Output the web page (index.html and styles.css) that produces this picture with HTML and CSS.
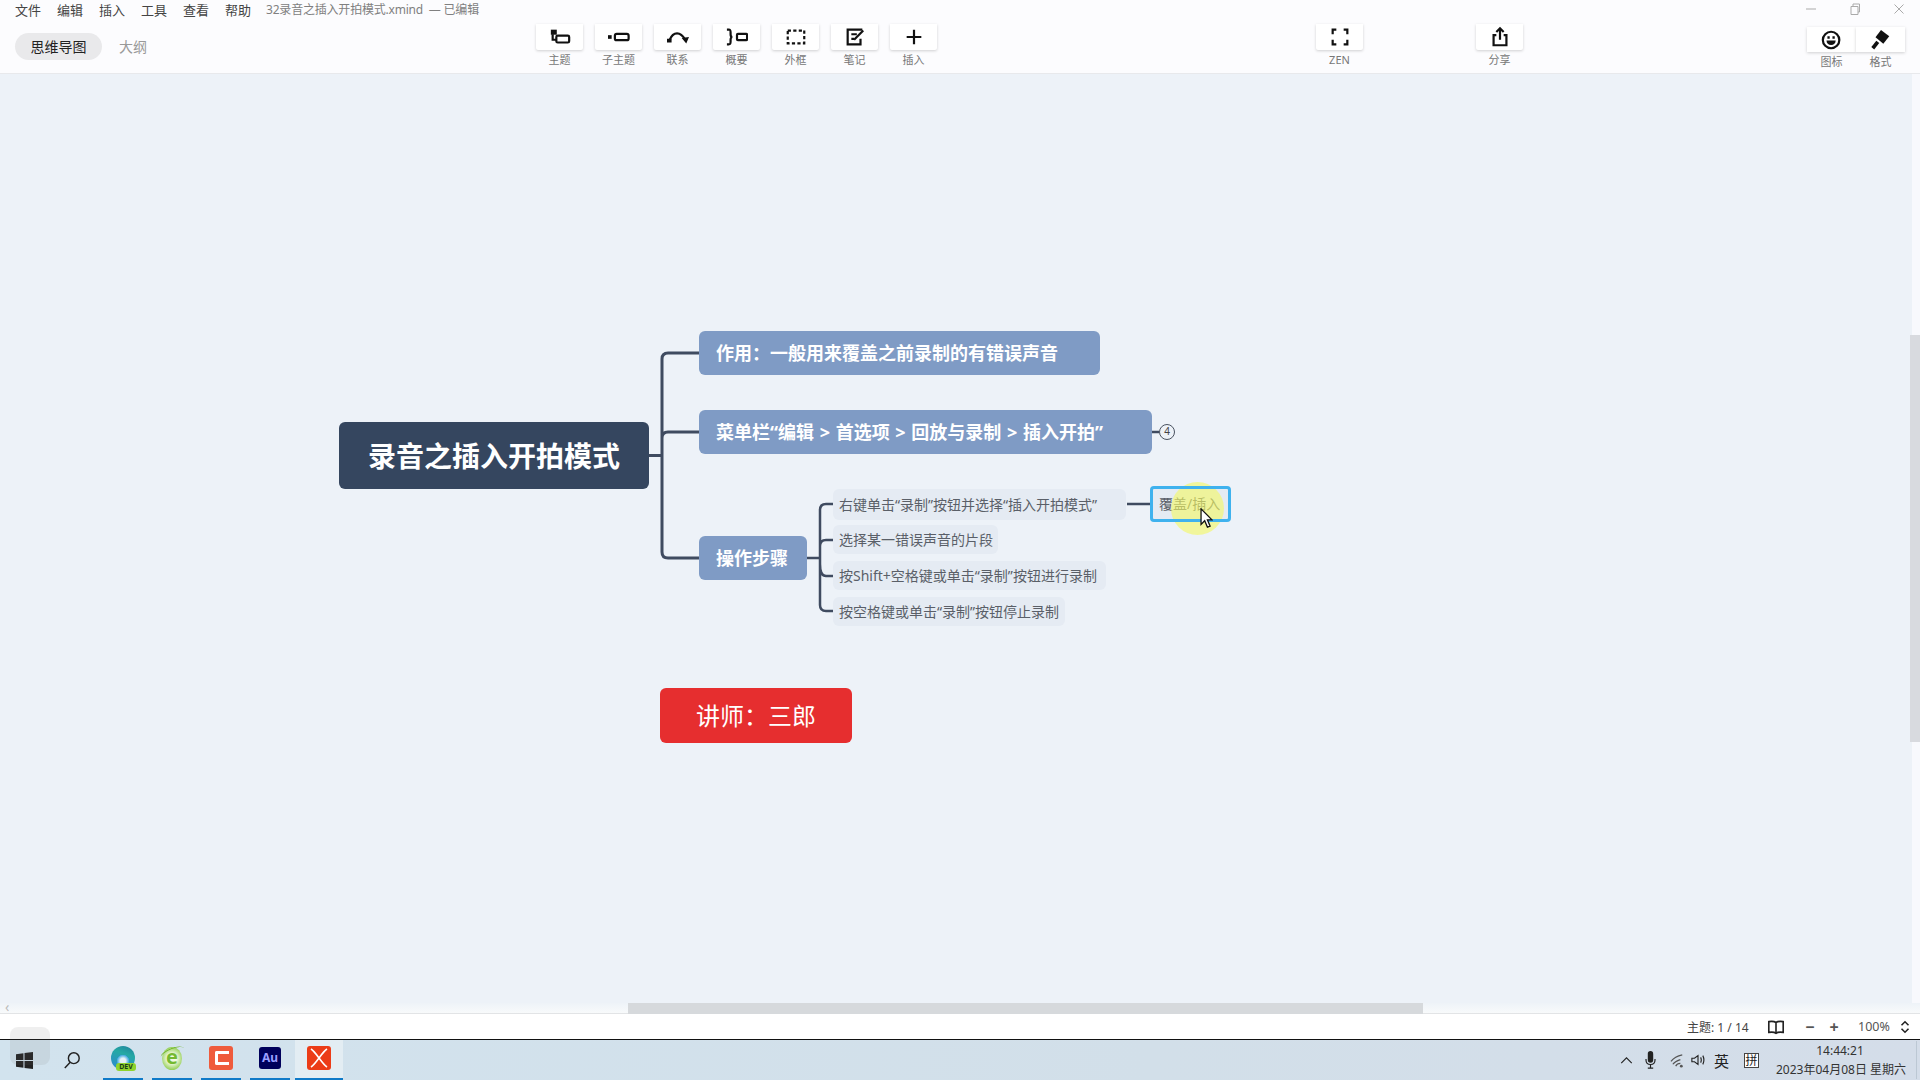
FILE: index.html
```html
<!DOCTYPE html>
<html>

<head>
    <title>32录音之插入开拍模式.xmind</title>
    <meta name="viewport" content="width=device-width, initial-scale=1.0">
    <link rel="stylesheet" href="styles.css">
</head>

<body>
    <div class="titlebar">
        <div class="menu">
            <span>文件</span><span>编辑</span><span>插入</span><span>工具</span><span>查看</span><span>帮助</span>
        </div>
        <div class="doc-title">32录音之插入开拍模式.xmind&nbsp; — 已编辑</div>
        <div class="win-controls">
            <svg viewBox="0 0 12 12"><path d="M1 6h10" /></svg>
            <svg viewBox="0 0 12 12"><path d="M2 3.500h7v8H2zM4 3.500V1h6.500v8H9" /></svg>
            <svg viewBox="0 0 12 12"><path d="M1.500 1.500l9 9M10.500 1.500l-9 9" /></svg>
        </div>
    </div>

    <div class="toolbar">
        <div class="view-tabs">
            <div class="view-tab active">思维导图</div>
            <div class="view-tab">大纲</div>
        </div>

        <div class="tool-group main-tools">
            <div class="tool">
                <div class="tool-box">
                    <svg viewBox="0 0 24 24">
                        <path class="solid" d="M2 4h6.500v5.500H2z" />
                        <path d="M4 9v6h4" />
                        <rect x="8" y="10.500" width="14" height="7.500" rx="1.500" />
                    </svg>
                </div>
                <div class="tool-label">主题</div>
            </div>
            <div class="tool">
                <div class="tool-box">
                    <svg viewBox="0 0 24 24">
                        <path class="solid" d="M0 10h4v4H0z" />
                        <rect x="7.500" y="8.500" width="15" height="7" rx="2" />
                    </svg>
                </div>
                <div class="tool-label">子主题</div>
            </div>
            <div class="tool">
                <div class="tool-box">
                    <svg viewBox="0 0 24 24">
                        <path class="solid" d="M0 14h5v4H0zM16 13l8-1-3 7z" />
                        <path d="M3 15c2-5 5-7 8-7s6 2 9 7" />
                    </svg>
                </div>
                <div class="tool-label">联系</div>
            </div>
            <div class="tool">
                <div class="tool-box">
                    <svg viewBox="0 0 24 24">
                        <path d="M1 4h2c2 0 2 1 2 3v2c0 2 1 3 2 3-1 0-2 1-2 3v2c0 2 0 3-2 3H1" />
                        <rect x="12" y="8.500" width="11" height="7" rx="1" />
                    </svg>
                </div>
                <div class="tool-label">概要</div>
            </div>
            <div class="tool">
                <div class="tool-box">
                    <svg viewBox="0 0 24 24">
                        <rect x="3" y="5" width="18" height="14" stroke-dasharray="3.500 2.500" />
                    </svg>
                </div>
                <div class="tool-label">外框</div>
            </div>
            <div class="tool">
                <div class="tool-box">
                    <svg viewBox="0 0 24 24">
                        <path d="M20 4H4v16h14v-6M8 9h6M8 14h3" />
                        <path d="M11 15l10-10" />
                    </svg>
                </div>
                <div class="tool-label">笔记</div>
            </div>
            <div class="tool">
                <div class="tool-box">
                    <svg viewBox="0 0 24 24"><path d="M12 4v16M4 12h16" /></svg>
                </div>
                <div class="tool-label">插入</div>
            </div>
        </div>

        <div class="tool zen-tool">
            <div class="tool-box">
                <svg viewBox="0 0 24 24">
                    <path d="M8 4H4v5M16 4h4v5M8 20H4v-5M16 20h4v-5" />
                </svg>
            </div>
            <div class="tool-label">ZEN</div>
        </div>

        <div class="tool share-tool">
            <div class="tool-box">
                <svg viewBox="0 0 24 24">
                    <path d="M8 10H5v11h14V10h-3M12 15V3M8 6.500L12 2.500l4 4" />
                </svg>
            </div>
            <div class="tool-label">分享</div>
        </div>

        <div class="side-tools">
            <div class="side-tool">
                <div class="side-box">
                    <svg viewBox="0 0 24 24">
                        <circle cx="11" cy="12" r="9" />
                        <path class="solid" d="M6 12.500h10c0 3-2 5-5 5s-5-2-5-5zM7 8h2.500v2.500H7zM12.500 8H15v2.500h-2.500z" />
                    </svg>
                </div>
                <div class="tool-label">图标</div>
            </div>
            <div class="side-tool">
                <div class="side-box">
                    <svg viewBox="0 0 24 24">
                        <path class="solid" d="M12 1l9 7-6.500 8L6 9z" />
                        <path class="brush-handle" d="M8.500 14L3 21" />
                    </svg>
                </div>
                <div class="tool-label">格式</div>
            </div>
        </div>
    </div>

    <!-- The map is a free canvas, nodes sit at their own coordinates -->
    <div class="canvas">
        <svg class="links" viewBox="0 0 1920 939">
            <path d="M649 381.500h13M699 279h-31q-6 0-6 6v193q0 6 6 6h31M662 364q0-6 6-6h31" />
            <path class="thin" d="M807 484h13M833 430h-7q-6 0-6 6v95q0 6 6 6h7M820 472q0-6 6-6h7M820 490q0 12 6 12h7" />
            <path class="thin" d="M1127 430h23M1152 358h7" />
        </svg>

        <div class="node root">录音之插入开拍模式</div>
        <div class="node topic topic-1">作用：一般用来覆盖之前录制的有错误声音</div>
        <div class="node topic topic-2">菜单栏“编辑 &gt; 首选项 &gt; 回放与录制 &gt; 插入开拍”</div>
        <div class="node topic topic-3">操作步骤</div>
        <div class="collapse">4</div>

        <div class="node sub sub-1">右键单击“录制”按钮并选择“插入开拍模式”</div>
        <div class="node sub sub-2">选择某一错误声音的片段</div>
        <div class="node sub sub-3">按Shift+空格键或单击“录制”按钮进行录制</div>
        <div class="node sub sub-4">按空格键或单击“录制”按钮停止录制</div>
        <div class="node sub picked">覆盖/插入</div>
        <div class="node teacher">讲师：三郎</div>

        <div class="spotlight"></div>
        <div class="picked-frame"></div>
        <svg class="pointer" viewBox="0 0 14 22">
            <path d="M1 1v17l4-4 3 7 3-1-3-7h5z" />
        </svg>

        <div class="v-scroll"><div class="v-thumb"></div></div>
        <div class="h-scroll">
            <span class="h-arrow">‹</span>
            <div class="h-thumb"></div>
        </div>
    </div>

    <div class="statusbar">
        <span class="topic-count">主题: 1 / 14</span>
        <svg class="status-icon book" viewBox="0 0 20 16">
            <path d="M10 3C8 1.500 5 1.500 2 2v12c3-.500 6-.500 8 1 2-1.500 5-1.500 8-1V2c-3-.500-6-.500-8 1zM10 3v12" />
        </svg>
        <span class="zoom-btn">−</span>
        <span class="zoom-btn">+</span>
        <span class="zoom-value">100%</span>
        <svg class="status-icon updown" viewBox="0 0 10 16">
            <path d="M1 6l4-4 4 4M1 10l4 4 4-4" />
        </svg>
    </div>

    <div class="taskbar">
        <div class="watermark"></div>
        <div class="task-start">
            <svg viewBox="0 0 16 16">
                <path d="M0 2.200l7-1v6.300H0zM8 1l8-1v7.500H8zM0 8.500h7v6.300l-7-1zM8 8.500h8V16l-8-1z" />
            </svg>
        </div>
        <div class="task-search">
            <svg viewBox="0 0 20 20">
                <circle cx="12" cy="8" r="6" />
                <path d="M8 12.500L2 19" />
            </svg>
        </div>

        <div class="task-app running">
            <div class="edge"><span class="dev-badge">DEV</span></div>
        </div>
        <div class="task-app running">
            <div class="ie">e</div>
        </div>
        <div class="task-app running">
            <div class="camtasia"><div class="camtasia-c"></div></div>
        </div>
        <div class="task-app running">
            <div class="audition">Au</div>
        </div>
        <div class="task-app running current">
            <div class="xmind">
                <svg viewBox="0 0 24 24"><path d="M4 3c5 3 11 15 16 18M20 3C15 6 9 18 4 21" /></svg>
            </div>
        </div>

        <div class="tray">
            <svg class="tray-icon chevron" viewBox="0 0 14 8"><path d="M1 7l6-6 6 6" /></svg>
            <svg class="tray-icon mic" viewBox="0 0 12 20">
                <rect class="solid" x="3" y="0" width="6" height="13" rx="3" />
                <path d="M1 9v1c0 3 2 5 5 5s5-2 5-5V9M6 15v4M3 19h6" />
            </svg>
            <svg class="tray-icon wifi" viewBox="0 0 18 16">
                <path d="M1 9c3-4 7-6 12-7M3 12c2-3 5-4 8-5M6 14c1-2 3-3 5-3" />
                <circle class="solid" cx="12" cy="14" r="1.500" />
            </svg>
            <svg class="tray-icon speaker" viewBox="0 0 16 16">
                <path d="M1 6v4h3l4 3V3L4 6zM11 5c1 2 1 4 0 6M13.500 3c1.500 3 1.500 7 0 10" />
            </svg>
            <span class="ime-lang">英</span>
            <span class="ime-mode">拼</span>
            <div class="clock">
                <div>14:44:21</div>
                <div>2023年04月08日 星期六</div>
            </div>
        </div>
    </div>
</body>

</html>
```

FILE: styles.css
```css
:root {
    --canvas-bg: #edf2f8;
    --chrome-bg: #fcfcfe;
    --line-color: #3f4b60;
    --topic-color: #7f9bc5;
    --text-grey: #666;
}

* {
    box-sizing: border-box;
}

html,
body {
    height: 100%;
}

body {
    margin: 0;
    display: flex;
    flex-direction: column;
    overflow: hidden;
    background: var(--chrome-bg);
    color: #333;
    font-family: "Noto Sans", "Noto Sans CJK SC", sans-serif;
}

svg {
    display: block;
    fill: none;
    stroke: currentColor;
}

svg .solid {
    fill: currentColor;
    stroke: none;
}

/* -- Title bar -- */
.titlebar {
    height: 20px;
    padding-left: 15px;
    padding-bottom: 2px;
    display: flex;
    align-items: center;
    font-size: 13px;
}

.menu {
    display: flex;
    gap: 16px;
    width: 251px;
    color: #444;
}

.doc-title {
    font-size: 12px;
    letter-spacing: -0.2px;
    color: #808080;
    white-space: nowrap;
}

.win-controls {
    margin-left: auto;
    width: 115px;
    padding-right: 15px;
    display: flex;
    justify-content: space-between;
    color: #aaa;
}

.win-controls svg {
    width: 12px;
    height: 12px;
    stroke-width: 1;
}

/* -- Toolbar -- */
.toolbar {
    height: 54px;
    padding-top: 4px;
    display: flex;
    border-bottom: 1px solid #e8e9ec;
}

.view-tabs {
    width: 536px;
    padding: 9px 0 0 15px;
    display: flex;
    align-items: flex-start;
    gap: 17px;
}

.view-tab {
    height: 27px;
    line-height: 27px;
    font-size: 14px;
    color: #999;
}

.view-tab.active {
    width: 87px;
    text-align: center;
    background: #e9e9eb;
    border-radius: 14px;
    color: #222;
}

.tool-group {
    display: flex;
    gap: 12px;
}

.tool {
    width: 47px;
    display: flex;
    flex-direction: column;
    align-items: center;
}

.tool-box {
    width: 47px;
    height: 26px;
    background: #fff;
    box-shadow: 0 1px 3px rgba(0, 0, 0, 0.18);
    border-radius: 0 0 2px 2px;
    display: flex;
    align-items: center;
    justify-content: center;
    color: #111;
}

.tool-box svg,
.side-box svg {
    width: 22px;
    height: 22px;
    stroke-width: 2.4;
}

.side-box .brush-handle {
    stroke-width: 4;
}

.tool-label {
    margin-top: 3px;
    font-size: 11px;
    line-height: 14px;
    color: #777;
    white-space: nowrap;
}

.zen-tool {
    margin-left: 379px;
}

.share-tool {
    margin-left: 113px;
}

.side-tools {
    margin-left: 284px;
    padding-top: 3px;
    display: flex;
}

.side-tool {
    width: 49px;
    text-align: center;
}

.side-box {
    height: 25px;
    background: #fff;
    box-shadow: 0 1px 3px rgba(0, 0, 0, 0.18);
    display: flex;
    align-items: center;
    justify-content: center;
    color: #111;
}

.side-tool .tool-label {
    margin-top: 3px;
}

/* -- Canvas -- */
.canvas {
    position: relative;
    flex: 1;
    background: var(--canvas-bg);
}

.links {
    position: absolute;
    top: 0;
    left: 0;
    width: 1920px;
    height: 939px;
    color: var(--line-color);
    stroke-width: 3;
}

.links .thin {
    stroke-width: 2.5;
}

.node {
    position: absolute;
    display: flex;
    align-items: center;
    white-space: nowrap;
    padding-bottom: 2px;
}

.root {
    left: 339px;
    top: 348px;
    width: 310px;
    height: 67px;
    justify-content: center;
    background: #35465f;
    border-radius: 6px;
    color: #fff;
    font-size: 28px;
    font-weight: 700;
}

.topic {
    left: 699px;
    height: 44px;
    padding-left: 17px;
    background: var(--topic-color);
    border-radius: 6px;
    color: #fff;
    font-size: 18px;
    font-weight: 700;
}

.topic-1 {
    top: 257px;
    width: 401px;
}

.topic-2 {
    top: 336px;
    width: 453px;
    word-spacing: 1px;
}

.topic-3 {
    top: 462px;
    width: 108px;
}

.collapse {
    position: absolute;
    left: 1159px;
    top: 350px;
    width: 16px;
    height: 16px;
    border: 1.5px solid #4a5260;
    border-radius: 50%;
    background: var(--canvas-bg);
    font-size: 10px;
    line-height: 13px;
    text-align: center;
    color: #444;
}

.sub {
    left: 833px;
    padding-left: 6px;
    background: #e5ebf3;
    border-radius: 6px;
    color: #5a5f68;
    font-size: 14px;
}

.sub-1 {
    top: 415px;
    width: 293px;
    height: 31px;
}

.sub-2 {
    top: 451px;
    width: 165px;
    height: 29px;
}

.sub-3 {
    top: 487px;
    width: 273px;
    height: 29px;
}

.sub-4 {
    top: 523px;
    width: 232px;
    height: 29px;
}

.picked {
    left: 1150px;
    top: 412px;
    width: 81px;
    height: 36px;
    padding-left: 9px;
    border-radius: 4px;
}

.picked-frame {
    position: absolute;
    left: 1150px;
    top: 412px;
    width: 81px;
    height: 36px;
    border: 3px solid #3fb2ee;
    border-radius: 4px;
}

.teacher {
    left: 660px;
    top: 614px;
    width: 192px;
    height: 55px;
    justify-content: center;
    background: #e62e2f;
    border-radius: 6px;
    color: #fff;
    font-size: 24px;
}

.spotlight {
    position: absolute;
    left: 1171px;
    top: 408px;
    width: 53px;
    height: 53px;
    border-radius: 50%;
    background: rgba(243, 248, 100, 0.62);
}

.pointer {
    position: absolute;
    left: 1200px;
    top: 434px;
    width: 13px;
    height: 20px;
    fill: #fff;
    stroke: #111;
    stroke-width: 1.4;
}

.v-scroll {
    position: absolute;
    top: 0;
    right: 0;
    bottom: 0;
    width: 8px;
    background: #f8f9fd;
}

.v-thumb {
    position: absolute;
    top: 261px;
    right: 0;
    width: 10px;
    height: 407px;
    background: #d8dadf;
}

.h-scroll {
    position: absolute;
    left: 0;
    right: 0;
    bottom: 0;
    height: 11px;
    background: linear-gradient(#eef3f8, #f8fafb);
    border-bottom: 1px solid #e2e4e6;
}

.h-arrow {
    position: absolute;
    left: 5px;
    top: -6px;
    font-size: 14px;
    color: #bbb;
}

.h-thumb {
    position: absolute;
    left: 628px;
    top: 0;
    width: 795px;
    height: 11px;
    background: #d6d9dc;
}

/* -- Status bar -- */
.statusbar {
    height: 25px;
    padding-left: 1687px;
    display: flex;
    align-items: center;
    background: #fff;
    font-size: 12px;
    color: #444;
}

.topic-count {
    width: 80px;
    white-space: nowrap;
}

.status-icon {
    stroke-width: 1.8;
    color: #222;
}

.book {
    width: 18px;
    height: 16px;
    margin-right: 13px;
}

.zoom-btn {
    width: 24px;
    text-align: center;
    font-size: 16px;
    font-weight: 700;
    color: #555;
}

.zoom-value {
    width: 54px;
    padding-left: 12px;
    font-size: 12.500px;
    color: #555;
}

.updown {
    width: 10px;
    height: 14px;
}

/* -- Windows taskbar -- */
.taskbar {
    position: relative;
    height: 41px;
    display: flex;
    align-items: stretch;
    border-top: 1px solid #111;
    background: linear-gradient(90deg, #d2e3ee, #d2dfe9 60%, #d4dde9);
}

.watermark {
    position: absolute;
    left: 10px;
    top: -13px;
    width: 40px;
    height: 38px;
    border-radius: 8px;
    background: rgba(110, 110, 110, 0.11);
}

.task-start {
    width: 48px;
    display: flex;
    align-items: center;
    justify-content: center;
    color: #222;
}

.task-start svg {
    width: 17px;
    height: 17px;
    fill: currentColor;
    stroke: none;
}

.task-search {
    width: 48px;
    margin-right: 7px;
    display: flex;
    align-items: center;
    justify-content: center;
    color: #222;
}

.task-search svg {
    width: 18px;
    height: 18px;
    stroke-width: 1.6;
}

.task-app {
    width: 40px;
    margin-right: 9px;
    display: flex;
    align-items: center;
    justify-content: center;
    padding-bottom: 2px;
    border-bottom: 2px solid transparent;
}

.task-app.running {
    border-bottom-color: #0f7ac8;
}

.task-app.current {
    width: 48px;
    margin-left: -4px;
    margin-right: 0;
    background: #e3edf3;
}

.edge {
    position: relative;
    width: 24px;
    height: 24px;
    border-radius: 50%;
    background: radial-gradient(circle at 50% 62%, #e4f0f6 0 14%, #35a3dc 32%, transparent 33%),
        linear-gradient(20deg, #2f86d6, #25a9a4 65%, #1f7f9c);
}

.dev-badge {
    position: absolute;
    left: 5px;
    bottom: -1px;
    width: 20px;
    height: 8px;
    background: #8fd32c;
    border-radius: 3px;
    font-size: 7px;
    font-weight: 700;
    line-height: 8px;
    text-align: center;
    color: #1a3a1a;
}

.ie {
    position: relative;
    width: 20px;
    height: 23px;
    border-radius: 50%;
    background: radial-gradient(circle, #f2fae4 30%, #94cf55 75%);
    font-size: 20px;
    font-weight: 700;
    line-height: 20px;
    text-align: center;
    color: #74b92f;
}

.ie::after {
    content: "";
    position: absolute;
    left: -2px;
    top: 1px;
    width: 25px;
    height: 9px;
    border-top: 1.5px solid #6fb52c;
    border-radius: 50%;
    transform: rotate(-22deg);
}

.camtasia {
    width: 24px;
    height: 24px;
    padding: 5px 6px;
    border-radius: 3px;
    background: #ef5b3c;
}

.camtasia-c {
    width: 14px;
    height: 14px;
    border: 3px solid #fff;
    border-right: none;
    border-radius: 2px 0 0 2px;
}

.audition {
    width: 22px;
    height: 22px;
    border-radius: 3px;
    background: #00005b;
    font-size: 12px;
    font-weight: 700;
    line-height: 22px;
    text-align: center;
    color: #9a9fff;
}

.xmind {
    width: 24px;
    height: 24px;
    border-radius: 3px;
    background: #ec3c17;
    color: #fff;
}

.xmind svg {
    stroke-width: 1.6;
}

.tray {
    margin-left: auto;
    padding-right: 3px;
    display: flex;
    align-items: center;
    color: #222;
}

.tray-icon {
    stroke-width: 1.3;
}

.chevron {
    width: 13px;
    height: 7px;
    margin-right: 12px;
}

.mic {
    width: 11px;
    height: 18px;
    margin-right: 14px;
}

.wifi {
    width: 17px;
    height: 15px;
    margin-right: 4px;
    color: #555;
}

.speaker {
    width: 14px;
    height: 14px;
    margin-right: 9px;
}

.ime-lang {
    width: 16px;
    margin-right: 14px;
    font-size: 15px;
}

.ime-mode {
    width: 15px;
    height: 15px;
    margin-right: 17px;
    border: 1px solid #444;
    background: #fff;
    font-size: 12px;
    line-height: 13px;
    text-align: center;
}

.clock {
    width: 141px;
    padding-right: 12px;
    font-size: 12px;
    line-height: 19px;
    text-align: center;
    white-space: nowrap;
    color: #333;
    border-right: 1px solid #bcc8d4;
}
```
